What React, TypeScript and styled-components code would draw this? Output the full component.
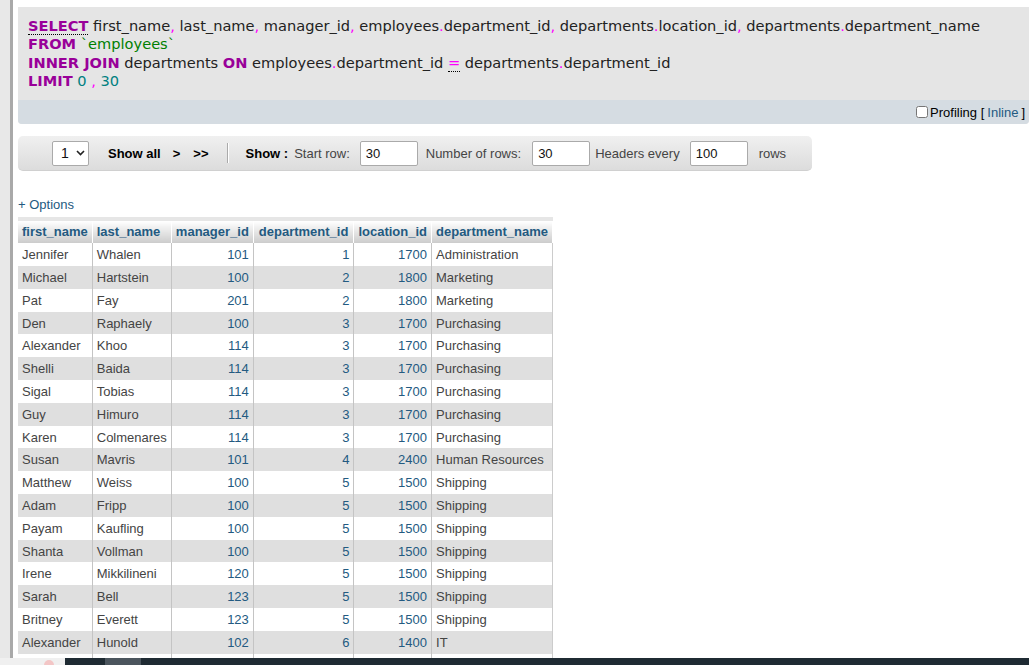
import styled, { createGlobalStyle } from 'styled-components';

const GlobalStyle = createGlobalStyle`
  html, body {
    margin: 0;
    padding: 0;
    height: 100%;
    overflow: hidden;
    background: #fff;
    font-family: "Liberation Sans", Arial, sans-serif;
    font-size: 13px;
  }
`;

const Page = styled.div`
  display: flex;
  height: 100vh;
`;

const SideStrip = styled.div`
  width: 10px;
  flex: 0 0 10px;
  background: #e8e8e8;
  border-right: 3px solid #a9a9a9;
`;

const Main = styled.div`
  flex: 1;
  padding: 7px 0 0 5px;
  min-width: 0;
`;

const SqlBox = styled.div`
  background: #e5e5e5;
  border-radius: 0 0 4px 4px;
`;

const Query = styled.div`
  padding: 10px 10px 10px 10px;
  font-family: "DejaVu Sans", Verdana, sans-serif;
  font-size: 14.6px;
  line-height: 18.3px;
  color: #222;
  white-space: nowrap;
`;

const Kw = styled.span<{ $dotted?: boolean }>`
  color: #990099;
  font-weight: bold;
  ${(p) => (p.$dotted ? 'border-bottom: 1px dotted #000;' : '')}
`;

const Punct = styled.span<{ $dotted?: boolean }>`
  color: #ff00ff;
  ${(p) => (p.$dotted ? 'border-bottom: 1px dotted #000;' : '')}
`;

const Str = styled.span`
  color: #008000;
`;

const Num = styled.span`
  color: #008080;
`;

const ProfilingBar = styled.div`
  background: #d5dce2;
  height: 24px;
  display: flex;
  align-items: center;
  justify-content: flex-end;
  padding-right: 4px;
  border-radius: 0 0 4px 4px;
  color: #000;
  font-size: 13px;
`;

const Check = styled.input`
  width: 12px;
  height: 12px;
  margin: 0 2px 0 0;
`;

const InlineLink = styled.span`
  color: #235a81;
  margin: 0 3px;
`;

const Toolbar = styled.div`
  margin-top: 12px;
  width: 794px;
  height: 35px;
  box-sizing: border-box;
  display: flex;
  align-items: center;
  padding-left: 34px;
  border-radius: 5px;
  background: linear-gradient(#f0f0f0, #dcdcdc);
  border-bottom: 1px solid #d0d0d0;
  color: #000;
`;

const PageSelect = styled.div`
  width: 37px;
  height: 25px;
  box-sizing: border-box;
  background: #fff;
  border: 1px solid #aaa;
  border-radius: 2px;
  display: flex;
  align-items: center;
  padding-left: 8px;
  gap: 7px;
  color: #111;
  font-size: 14px;
`;

const NavText = styled.span<{ $gap: number }>`
  font-weight: bold;
  margin-left: ${(p) => p.$gap}px;
  font-size: 13px;
`;

const Sep = styled.span`
  width: 1px;
  height: 20px;
  background: #aaa;
  border-right: 1px solid #fff;
  margin: 0 17px 0 18px;
`;

const Label = styled.span<{ $gap?: number }>`
  color: #444;
  margin-left: ${(p) => p.$gap ?? 0}px;
  font-size: 13px;
`;

const NumInput = styled.div<{ $gap: number }>`
  width: 58px;
  height: 25px;
  box-sizing: border-box;
  background: #fff;
  border: 1px solid #aaa;
  border-radius: 2px;
  margin-left: ${(p) => p.$gap}px;
  padding-left: 5px;
  display: flex;
  align-items: center;
  color: #111;
  font-size: 13px;
`;

const Options = styled.div`
  margin-top: 26px;
  color: #235a81;
  font-size: 13px;
  line-height: 15px;
`;

const Table = styled.table`
  margin-top: 5px;
  border-collapse: collapse;
  font-size: 13px;
  line-height: 15px;
  border-top: 4px solid #e6e6e6;
`;

const Th = styled.th<{ $wide?: boolean }>`
  background: linear-gradient(#ffffff, #cccccc);
  color: #235a81;
  font-weight: bold;
  padding: 3px ${(p) => (p.$wide ? 5 : 4)}px 4px;
  text-align: left;
  white-space: nowrap;
  border-right: 1px solid #fff;
`;

const Row = styled.tr`
  background: #fff;
  height: 22.8px;
  &:nth-child(even) {
    background: #dfdfdf;
  }
`;

const Td = styled.td<{ $num?: boolean }>`
  padding: 4px 4px 3.8px 4px;
  border-right: 1px solid #c4c4c4;
  white-space: nowrap;
  text-align: ${(p) => (p.$num ? 'right' : 'left')};
  color: ${(p) => (p.$num ? '#235a81' : '#444')};
  &:last-child {
    border-right: 1px solid #ccc;
  }
`;

const Taskbar = styled.div`
  position: fixed;
  left: 0;
  right: 0;
  bottom: 0;
  height: 7px;
  display: flex;
  background: #1f2b33;
`;

const StartArea = styled.div`
  width: 65px;
  background: #f0f0f0;
  position: relative;
`;

const Pin = styled.div`
  position: absolute;
  left: 44px;
  top: 2px;
  width: 10px;
  height: 5px;
  border-radius: 5px 5px 0 0;
  background: #f3c6c6;
`;

const ActiveApp = styled.div`
  margin-left: 40px;
  width: 36px;
  background: #4b555d;
`;

const rows: [string, string, number, number, number, string][] = [
  ['Jennifer', 'Whalen', 101, 1, 1700, 'Administration'],
  ['Michael', 'Hartstein', 100, 2, 1800, 'Marketing'],
  ['Pat', 'Fay', 201, 2, 1800, 'Marketing'],
  ['Den', 'Raphaely', 100, 3, 1700, 'Purchasing'],
  ['Alexander', 'Khoo', 114, 3, 1700, 'Purchasing'],
  ['Shelli', 'Baida', 114, 3, 1700, 'Purchasing'],
  ['Sigal', 'Tobias', 114, 3, 1700, 'Purchasing'],
  ['Guy', 'Himuro', 114, 3, 1700, 'Purchasing'],
  ['Karen', 'Colmenares', 114, 3, 1700, 'Purchasing'],
  ['Susan', 'Mavris', 101, 4, 2400, 'Human Resources'],
  ['Matthew', 'Weiss', 100, 5, 1500, 'Shipping'],
  ['Adam', 'Fripp', 100, 5, 1500, 'Shipping'],
  ['Payam', 'Kaufling', 100, 5, 1500, 'Shipping'],
  ['Shanta', 'Vollman', 100, 5, 1500, 'Shipping'],
  ['Irene', 'Mikkilineni', 120, 5, 1500, 'Shipping'],
  ['Sarah', 'Bell', 123, 5, 1500, 'Shipping'],
  ['Britney', 'Everett', 123, 5, 1500, 'Shipping'],
  ['Alexander', 'Hunold', 102, 6, 1400, 'IT'],
];

const headers = ['first_name', 'last_name', 'manager_id', 'department_id', 'location_id', 'department_name'];

function Chevron() {
  return (
    <svg width="9" height="6" viewBox="0 0 9 6">
      <path d="M1 1 L4.5 4.5 L8 1" fill="none" stroke="#222" strokeWidth="1.6" />
    </svg>
  );
}

export default function App() {
  return (
    <>
      <GlobalStyle />
      <Page>
        <SideStrip />
        <Main>
          <SqlBox>
            <Query>
              <div>
                <Kw $dotted>SELECT</Kw> first_name<Punct>,</Punct> last_name<Punct>,</Punct> manager_id<Punct>,</Punct>{' '}
                employees<Punct>.</Punct>department_id<Punct>,</Punct> departments<Punct>.</Punct>location_id<Punct>,</Punct>{' '}
                departments<Punct>.</Punct>department_name
              </div>
              <div>
                <Kw>FROM</Kw> <Str>`employees`</Str>
              </div>
              <div>
                <Kw>INNER JOIN</Kw> departments <Kw>ON</Kw> employees<Punct>.</Punct>department_id{' '}
                <Punct $dotted>=</Punct> departments<Punct>.</Punct>department_id
              </div>
              <div>
                <Kw>LIMIT</Kw> <Num>0</Num> <Punct>,</Punct> <Num>30</Num>
              </div>
            </Query>
            <ProfilingBar>
              <Check type="checkbox" readOnly />
              Profiling [<InlineLink>Inline</InlineLink>]
            </ProfilingBar>
          </SqlBox>

          <Toolbar>
            <PageSelect>
              1 <Chevron />
            </PageSelect>
            <NavText $gap={19}>Show all</NavText>
            <NavText $gap={12}>&gt;</NavText>
            <NavText $gap={13}>&gt;&gt;</NavText>
            <Sep />
            <NavText $gap={0}>Show :</NavText>
            <Label $gap={6}>Start row:</Label>
            <NumInput $gap={10}>30</NumInput>
            <Label $gap={8}>Number of rows:</Label>
            <NumInput $gap={11}>30</NumInput>
            <Label $gap={5}>Headers every</Label>
            <NumInput $gap={10}>100</NumInput>
            <Label $gap={11}>rows</Label>
          </Toolbar>

          <Options>+ Options</Options>
          <Table>
            <thead>
              <tr>
                {headers.map((h) => (
                  <Th key={h} $wide={h === 'department_id'}>
                    {h}
                  </Th>
                ))}
              </tr>
            </thead>
            <tbody>
              {rows.map((r, i) => (
                <Row key={i}>
                  <Td>{r[0]}</Td>
                  <Td>{r[1]}</Td>
                  <Td $num>{r[2]}</Td>
                  <Td $num>{r[3]}</Td>
                  <Td $num>{r[4]}</Td>
                  <Td>{r[5]}</Td>
                </Row>
              ))}
              <Row>
                <Td />
                <Td />
                <Td $num />
                <Td $num />
                <Td $num />
                <Td />
              </Row>
            </tbody>
          </Table>
        </Main>
      </Page>
      <Taskbar>
        <StartArea>
          <Pin />
        </StartArea>
        <ActiveApp />
      </Taskbar>
    </>
  );
}
